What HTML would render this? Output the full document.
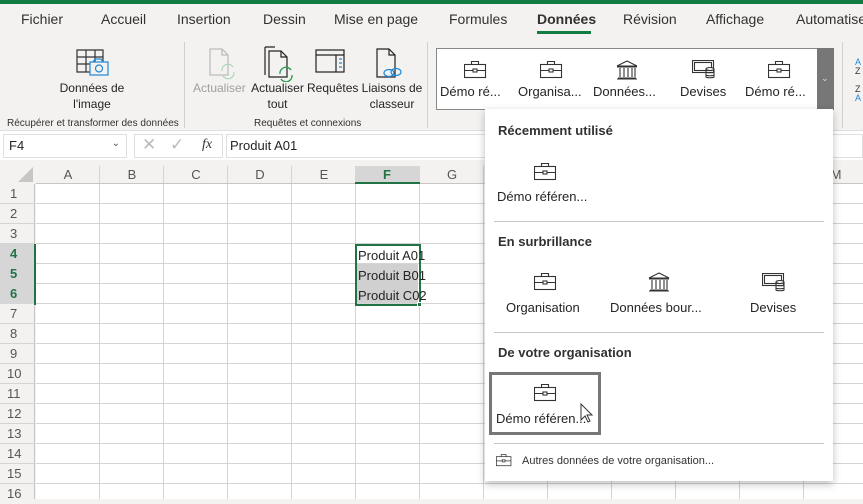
<!DOCTYPE html>
<html><head><meta charset="utf-8"><style>
*{margin:0;padding:0;box-sizing:border-box}
body{width:863px;height:499px;overflow:hidden;background:#f3f2f1;font-family:"Segoe UI","Liberation Sans",sans-serif;color:#252423;position:relative;font-size:12px}
.a{position:absolute}
.tab{position:absolute;top:11px;font-size:14px;color:#323130}
.lbl{position:absolute;font-size:12px;text-align:center;line-height:16px;color:#252423;white-space:nowrap}
.grp{position:absolute;font-size:10px;color:#323130;top:118px;white-space:nowrap}
.ch{position:absolute;top:166px;height:18px;font-size:13px;color:#555;text-align:center;line-height:18px;width:64px}
.rh{position:absolute;left:0;width:35px;height:20px;font-size:13px;color:#555;line-height:20px;padding-left:10px}
.gi{position:absolute;text-align:center;font-size:13px;color:#252423;white-space:nowrap}
.sec{position:absolute;left:498px;font-size:13px;font-weight:bold;color:#323130}
.hr{position:absolute;left:494px;width:330px;height:1px;background:#c8c6c4}
</style></head><body>
<div class="a" style="left:0;top:0;width:863px;height:4px;background:#107c41"></div>
<div class="tab" style="left:21px">Fichier</div>
<div class="tab" style="left:101px">Accueil</div>
<div class="tab" style="left:177px">Insertion</div>
<div class="tab" style="left:263px">Dessin</div>
<div class="tab" style="left:334px">Mise en page</div>
<div class="tab" style="left:449px">Formules</div>
<div class="tab" style="left:537px;font-weight:bold">Données</div>
<div class="a" style="left:537px;top:31px;width:54px;height:3px;background:#107c41"></div>
<div class="tab" style="left:623px">Révision</div>
<div class="tab" style="left:706px">Affichage</div>
<div class="tab" style="left:796px">Automatise</div>

<svg class="a" style="left:76px;top:48px" width="34" height="32" viewBox="0 0 34 32" fill="none" stroke="#333" stroke-width="1.2"><path d="M1 2h26v22H1zM1 9h26M1 16h26M10 2v22M19 2v22"/><rect x="14" y="14" width="18" height="13" fill="#f3f2f1" stroke="#1e88d6"/><circle cx="23" cy="20.5" r="3.5" stroke="#1e88d6"/><path d="M17 14l2-3h6l2 3" stroke="#1e88d6"/></svg>
<div class="lbl" style="left:52px;top:80px;width:80px">Données de<br>l'image</div>
<div class="a" style="left:184px;top:42px;width:1px;height:86px;background:#d2d0ce"></div>
<svg class="a" style="left:208px;top:48px" width="30" height="34" viewBox="0 0 30 34" fill="none" stroke="#bbb" stroke-width="1.2"><path d="M2 1h12l6 6v20H2z"/><path d="M14 1v6h6"/><path d="M14 23a6 6 0 0 1 11-4M26 24a6 6 0 0 1-11 4" stroke="#a9d8b8"/></svg>
<div class="lbl" style="left:193px;top:80px;color:#a19f9d">Actualiser</div>
<svg class="a" style="left:264px;top:44px" width="32" height="38" viewBox="0 0 32 38" fill="none" stroke="#222" stroke-width="1.2"><path d="M1 3v28M1 3h10M5 7h12l6 6v20H5z"/><path d="M17 7v6h6"/><path d="M16 30a6 6 0 0 1 11-4M28 31a6 6 0 0 1-11 4" stroke="#2e9d55" stroke-width="1.4"/></svg>
<div class="lbl" style="left:250px;top:80px;width:55px">Actualiser<br>tout</div>
<svg class="a" style="left:315px;top:49px" width="30" height="24" viewBox="0 0 30 24" fill="none" stroke="#222" stroke-width="1.2"><rect x="1" y="1" width="28" height="22"/><path d="M1 6h28M21 6v17"/><path d="M24 10h3M24 14h3M24 18h3" stroke="#1e88d6"/></svg>
<div class="lbl" style="left:307px;top:80px">Requêtes</div>
<svg class="a" style="left:376px;top:48px" width="30" height="32" viewBox="0 0 30 32" fill="none" stroke="#222" stroke-width="1.2"><path d="M1 1h12l6 6v22H1z"/><path d="M13 1v6h6"/><ellipse cx="13" cy="25" rx="5" ry="3.5" stroke="#1e88d6"/><ellipse cx="20" cy="24" rx="5" ry="3.5" stroke="#1e88d6"/></svg>
<div class="lbl" style="left:359px;top:80px;width:66px">Liaisons de<br>classeur</div>
<div class="grp" style="left:7px">Récupérer et transformer des données</div>
<div class="grp" style="left:254px">Requêtes et connexions</div>
<div class="a" style="left:427px;top:42px;width:1px;height:86px;background:#d2d0ce"></div>
<div class="a" style="left:842px;top:42px;width:1px;height:86px;background:#d2d0ce"></div>
<div class="a" style="left:855px;top:58px;font-size:9px;line-height:9px;color:#1e88d6">A<br><span style="color:#333">Z</span><br><br><span style="color:#333">Z</span><br>A</div>
<div class="a" style="left:0;top:130px;width:863px;height:1px;background:#e1dfdd"></div>

<div class="a" style="left:436px;top:48px;width:398px;height:62px;background:#fff;border:1px solid #8a8886"></div>
<div class="a" style="left:817px;top:48px;width:17px;height:62px;background:#777"></div>
<div class="a" style="left:821px;top:73px;font-size:9px;color:#ddd">⌄</div>

<svg width="0" height="0" style="position:absolute"><defs>
<g id="bc" fill="none" stroke="#333" stroke-width="1.1"><rect x="0.5" y="3.5" width="21" height="13"/><path d="M7.5 3.5v-3h7v3M0.5 9.5h21"/><rect x="9" y="8" width="4" height="3" fill="#fff"/></g>
<g id="bank" fill="none" stroke="#333" stroke-width="1.1"><path d="M1 6L11 1l10 5zM1 7h20M1 19h20M2 18h18"/><path d="M4 8v9M8 8v9M12 8v9M16 8v9M19 8v9"/></g>
<g id="cur" fill="none" stroke="#333" stroke-width="1.1"><rect x="0.5" y="0.5" width="21" height="12"/><rect x="2.5" y="2.5" width="17" height="8"/><ellipse cx="18" cy="9" rx="4" ry="1.5" fill="#fff"/><path d="M14 9v8c0 1 8 1 8 0V9M14 12c0 1 8 1 8 0M14 15c0 1 8 1 8 0"/></g>
</defs></svg>
<svg class="a" style="left:464px;top:61px" width="23" height="18"><use href="#bc"/></svg>
<svg class="a" style="left:540px;top:61px" width="23" height="18"><use href="#bc"/></svg>
<svg class="a" style="left:616px;top:60px" width="23" height="21"><use href="#bank"/></svg>
<svg class="a" style="left:692px;top:60px" width="24" height="22"><use href="#cur"/></svg>
<svg class="a" style="left:768px;top:61px" width="23" height="18"><use href="#bc"/></svg>
<div class="gi" style="left:440px;top:84px">Démo ré...</div>
<div class="gi" style="left:518px;top:84px">Organisa...</div>
<div class="gi" style="left:593px;top:84px">Données...</div>
<div class="gi" style="left:680px;top:84px">Devises</div>
<div class="gi" style="left:745px;top:84px">Démo ré...</div>

<div class="a" style="left:0;top:131px;width:863px;height:29px;background:#fff"></div>
<div class="a" style="left:3px;top:134px;width:124px;height:24px;border:1px solid #e1dfdd;background:#fff;font-size:13px;padding:3px 5px">F4<span style="position:absolute;right:6px;top:3px;font-size:10px;color:#555">⌄</span></div>
<div class="a" style="left:134px;top:134px;width:89px;height:24px;border:1px solid #e1dfdd;background:#fff"></div>
<div class="a" style="left:142px;top:135px;font-size:17px;color:#bbb">✕</div>
<div class="a" style="left:170px;top:135px;font-size:17px;color:#bbb">✓</div>
<div class="a" style="left:202px;top:137px;font-size:14px;font-style:italic;font-family:'Liberation Serif',serif;color:#333">fx</div>
<div class="a" style="left:226px;top:134px;width:637px;height:24px;border:1px solid #e1dfdd;background:#fff;font-size:13px;padding:3px 3px">Produit A01</div>

<div class="a" style="left:0;top:160px;width:863px;height:339px;background:#f3f2f1"></div>
<div class="a" style="left:36px;top:184px;width:827px;height:315px;background-color:#fff;background-image:linear-gradient(to right,transparent 63px,#d4d4d4 63px),linear-gradient(to bottom,transparent 19px,#d4d4d4 19px);background-size:64px 100%,100% 20px"></div>
<div class="a" style="left:36px;top:166px;width:827px;height:18px;background-image:linear-gradient(to right,transparent 63px,#d4d4d4 63px);background-size:64px 100%;border-bottom:1px solid #c8c6c4"></div>
<div class="a" style="left:0;top:184px;width:35px;height:315px;background-image:linear-gradient(to bottom,transparent 19px,#d4d4d4 19px);background-size:100% 20px;border-right:1px solid #c8c6c4"></div>
<svg class="a" style="left:18px;top:167px" width="15" height="15"><path d="M15 0V15H0z" fill="#c8c6c4"/></svg>
<div class="a" style="left:355px;top:166px;width:65px;height:18px;background:#d6d6d6;border-bottom:2px solid #217346"></div>
<div class="ch" style="left:36px">A</div><div class="ch" style="left:100px">B</div><div class="ch" style="left:164px">C</div><div class="ch" style="left:228px">D</div><div class="ch" style="left:292px">E</div>
<div class="ch" style="left:355px;color:#217346;font-weight:bold">F</div><div class="ch" style="left:420px">G</div><div class="ch" style="left:804px">M</div>
<div class="a" style="left:0;top:244px;width:34px;height:60px;background:#d6d6d6"></div>
<div class="a" style="left:34px;top:244px;width:2px;height:61px;background:#217346"></div>
<div class="rh" style="top:184px">1</div><div class="rh" style="top:204px">2</div><div class="rh" style="top:224px">3</div>
<div class="rh" style="top:244px;color:#217346;font-weight:bold">4</div><div class="rh" style="top:264px;color:#217346;font-weight:bold">5</div><div class="rh" style="top:284px;color:#217346;font-weight:bold">6</div>
<div class="rh" style="top:304px">7</div><div class="rh" style="top:324px">8</div><div class="rh" style="top:344px">9</div><div class="rh" style="top:364px;padding-left:7px">10</div><div class="rh" style="top:384px;padding-left:7px">11</div><div class="rh" style="top:404px;padding-left:7px">12</div><div class="rh" style="top:424px;padding-left:7px">13</div><div class="rh" style="top:444px;padding-left:7px">14</div><div class="rh" style="top:464px;padding-left:7px">15</div><div class="rh" style="top:484px;padding-left:7px">16</div>
<div class="a" style="left:357px;top:264px;width:61px;height:39px;background:#d0d0d0"></div>
<div class="a" style="left:355px;top:244px;width:66px;height:62px;border:2px solid #217346"></div>
<div class="a" style="left:417px;top:302px;width:5px;height:5px;background:#217346;border:1px solid #fff"></div>
<div class="a" style="left:358px;top:246px;font-size:13px;line-height:20px">Produit A01<br>Produit B01<br>Produit C02</div>

<div class="a" style="left:485px;top:109px;width:348px;height:372px;background:#fff;box-shadow:0 3px 8px rgba(0,0,0,.25)"></div>
<div class="sec" style="top:123px">Récemment utilisé</div>
<svg class="a" style="left:534px;top:163px" width="23" height="18"><use href="#bc"/></svg>
<div class="gi" style="left:497px;top:189px">Démo référen...</div>
<div class="hr" style="top:221px"></div>
<div class="sec" style="top:234px">En surbrillance</div>
<svg class="a" style="left:534px;top:273px" width="23" height="18"><use href="#bc"/></svg>
<svg class="a" style="left:648px;top:272px" width="23" height="21"><use href="#bank"/></svg>
<svg class="a" style="left:762px;top:273px" width="24" height="22"><use href="#cur"/></svg>
<div class="gi" style="left:506px;top:300px">Organisation</div>
<div class="gi" style="left:610px;top:300px">Données bour...</div>
<div class="gi" style="left:750px;top:300px">Devises</div>
<div class="hr" style="top:332px"></div>
<div class="sec" style="top:345px">De votre organisation</div>
<div class="a" style="left:489px;top:372px;width:112px;height:63px;border:3px solid #777"></div>
<svg class="a" style="left:534px;top:384px" width="23" height="18"><use href="#bc"/></svg>
<div class="gi" style="left:496px;top:411px">Démo référen...</div>
<svg class="a" style="left:580px;top:403px" width="14" height="22"><path d="M1 1v16l4-4 3 6 2-1-3-6h5z" fill="#fff" stroke="#333"/></svg>
<div class="hr" style="top:443px"></div>
<svg class="a" style="left:496px;top:454px" width="16" height="13" viewBox="0 0 23 18"><use href="#bc"/></svg>
<div class="a" style="left:522px;top:455px;font-size:11px;color:#323130">Autres données de votre organisation...</div>
</body></html>
